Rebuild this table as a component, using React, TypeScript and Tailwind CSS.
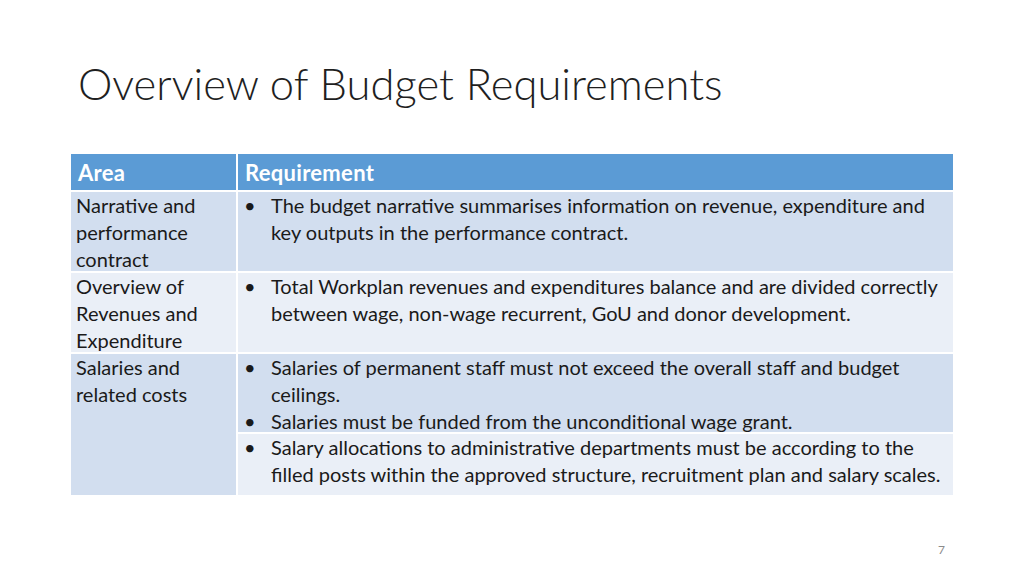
const rows = [
  {
    area: "Narrative and performance contract",
    bg: "bg-[#d2deef]",
    items: [
      "The budget narrative summarises information on revenue, expenditure and key outputs in the performance contract.",
    ],
  },
  {
    area: "Overview of Revenues and Expenditure",
    bg: "bg-[#eaeff7]",
    items: [
      "Total Workplan revenues and expenditures balance and are divided correctly between wage, non-wage recurrent, GoU and donor development.",
    ],
  },
];

const Bullets = ({ items }: { items: string[] }) => (
  <ul className="pr-[8px]">
    {items.map((t) => (
      <li key={t} className="flex">
        <span className="w-[33px] shrink-0 pl-[6px]">•</span>
        <span>{t}</span>
      </li>
    ))}
  </ul>
);

export default function App() {
  return (
    <div
      className="w-[1024px] h-[576px] bg-white relative overflow-hidden text-[#1a1a1a]"
      style={{ fontFamily: "Lato, 'Liberation Sans', sans-serif" }}
    >
      <div className="pt-[56px] pl-[78px]">
        <h1 className="text-[43.5px] font-light leading-[54px] text-[#1f1f1f]">
          Overview of Budget Requirements
        </h1>
      </div>

      {/* Table */}
      <div className="ml-[71px] mt-[44px] w-[882px] grid grid-cols-[165px_715px] grid-rows-[36px_79px_79px_78px_61px] gap-[2px] bg-white text-[20px] leading-[27px]">
        <div className="bg-[#5b9bd5] text-white font-bold text-[22px] tracking-[0.3px] px-[7px] flex items-center">Area</div>
        <div className="bg-[#5b9bd5] text-white font-bold text-[22px] tracking-[0.3px] px-[7px] flex items-center">Requirement</div>

        {rows.map((r) => (
          <div key={r.area} className="contents">
            <div className={`${r.bg} px-[5px]`}>{r.area}</div>
            <div className={r.bg}>
              <Bullets items={r.items} />
            </div>
          </div>
        ))}

        <div className="bg-[#d2deef] px-[5px] row-span-2">Salaries and related costs</div>
        <div className="bg-[#d2deef]">
          <Bullets
            items={[
              "Salaries of permanent staff must not exceed the overall staff and budget ceilings.",
              "Salaries must be funded from the unconditional wage grant.",
            ]}
          />
        </div>
        <div className="bg-[#eaeff7]">
          <Bullets
            items={[
              "Salary allocations to administrative departments must be according to the filled posts within the approved structure, recruitment plan and salary scales.",
            ]}
          />
        </div>
      </div>

      <div className="absolute left-[938px] top-[541px] text-[12px] text-[#8c8c8c]">7</div>
    </div>
  );
}
